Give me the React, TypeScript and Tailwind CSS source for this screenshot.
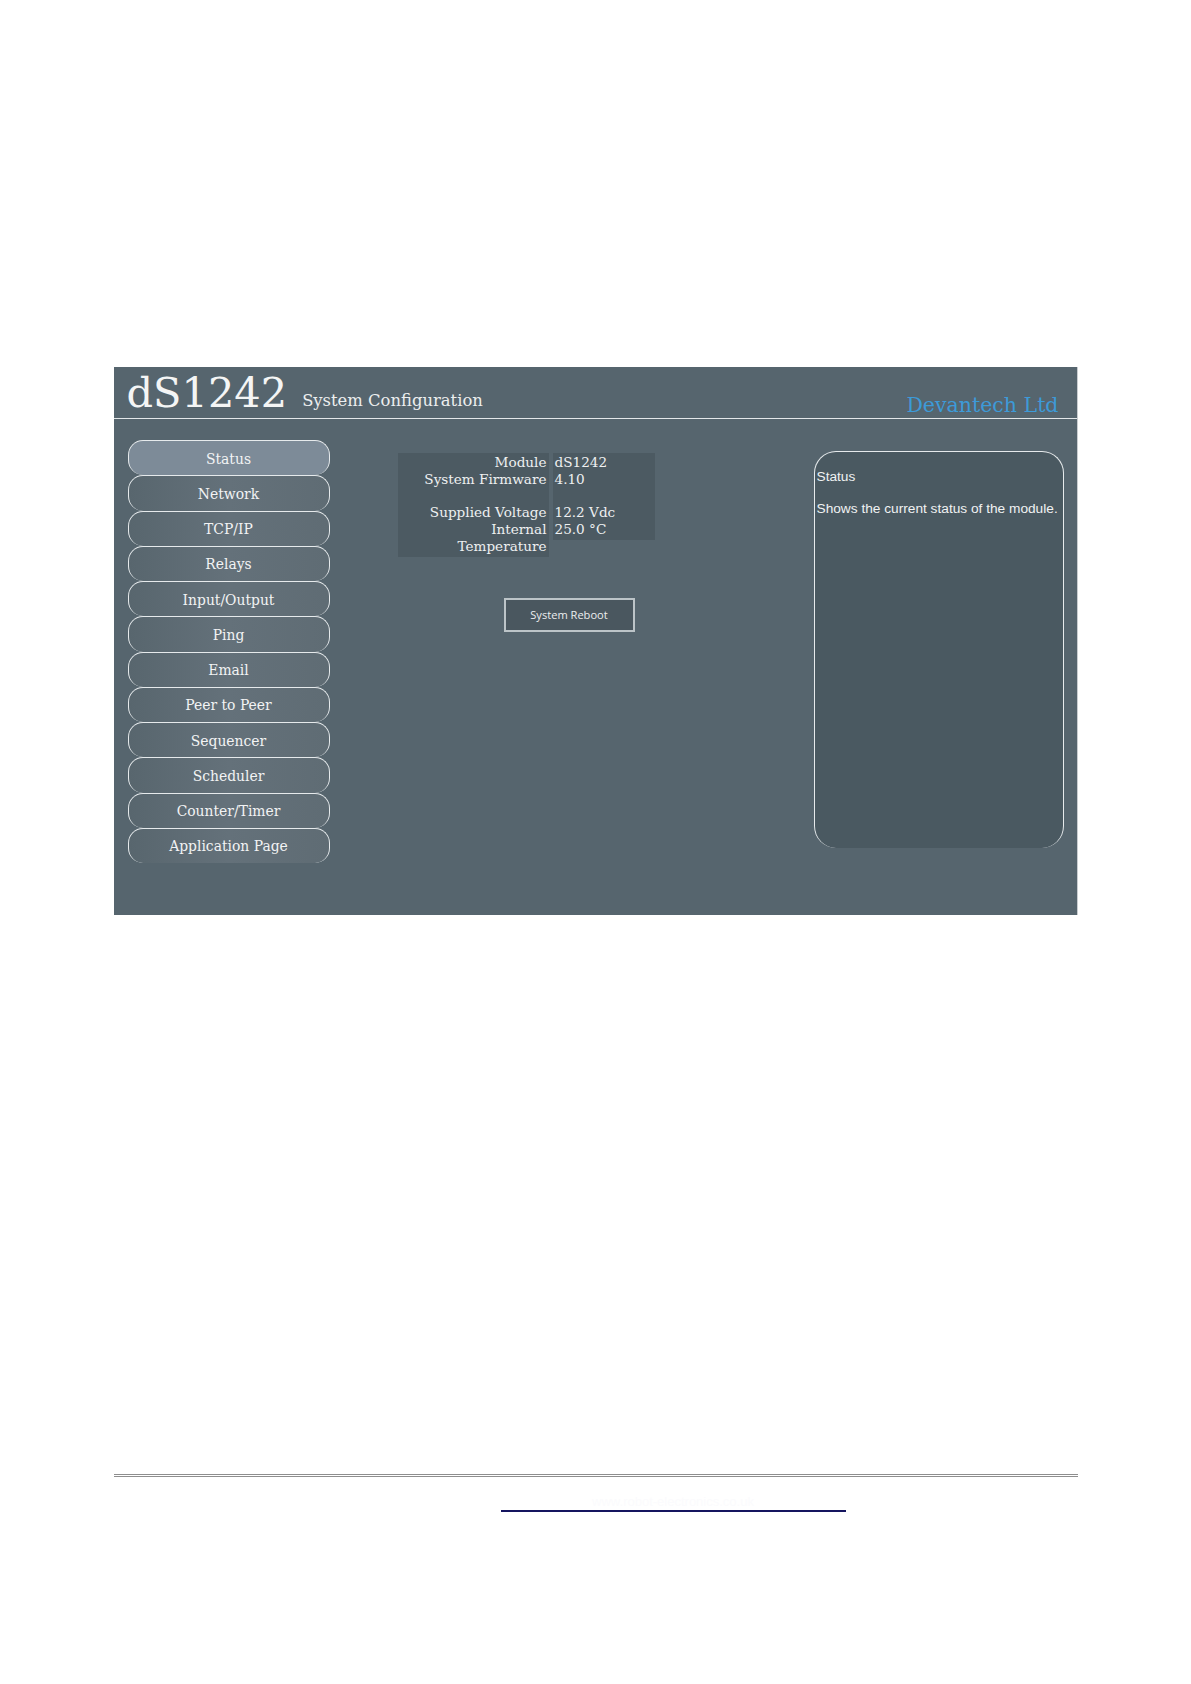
import React from "react";

const navItems = [
  "Status",
  "Network",
  "TCP/IP",
  "Relays",
  "Input/Output",
  "Ping",
  "Email",
  "Peer to Peer",
  "Sequencer",
  "Scheduler",
  "Counter/Timer",
  "Application Page",
];

const serif = "font-['DejaVu_Serif',serif]";

export default function App() {
  return (
    <div className="min-h-[1684px] w-full bg-white">
      <div className="pt-[367px]">
        <div className="mx-auto flex h-[548px] w-[964px] flex-col border-r border-[#c9cdd0] bg-[#56656e]">
          {/* Header */}
          <div className="flex h-[52px] shrink-0 items-end border-b border-[#e3e7e9] pl-[13px] pr-[18px]">
            <span className={`${serif} mb-[5px] text-[41.5px] leading-none text-[#f4f5f5]`}>dS1242</span>
            <span className={`${serif} mb-[9px] ml-[15px] text-[16.4px] leading-none text-[#eceeef]`}>
              System Configuration
            </span>
            <span className={`${serif} mb-[3px] ml-auto text-[20.5px] leading-none text-[#3d9ad8]`}>
              Devantech Ltd
            </span>
          </div>

          {/* Body */}
          <div className="flex flex-1">
            {/* Nav */}
            <div className="ml-[14px] mt-[21px] flex w-[202px] flex-col">
              {navItems.map((item, i) => (
                <div
                  key={item}
                  className={`flex h-[35.25px] items-center justify-center rounded-[15px] border-x border-t border-[#e6eaec] ${serif} pt-[2px] text-[13.9px] text-[#f2f3f4] ${
                    i === 0
                      ? "bg-[#7d8b98]"
                      : "bg-linear-to-r from-[#58666e] via-[#64717a] to-[#5f6c74]"
                  }`}
                >
                  {item}
                </div>
              ))}
            </div>

            {/* Middle: status table + reboot */}
            <div className="ml-[68px] mt-[34px] flex flex-col items-start">
              <div className={`flex items-start gap-[4px] ${serif} text-[13.6px] leading-[16.7px] text-[#eef0f1]`}>
                <div className="w-[151px] bg-[#4c5a62] pb-[3px] pr-[2px] pt-[1px] text-right">
                  <div>Module</div>
                  <div>System Firmware</div>
                  <div>&nbsp;</div>
                  <div>Supplied Voltage</div>
                  <div>Internal</div>
                  <div>Temperature</div>
                </div>
                <div className="w-[102px] bg-[#4c5a62] pb-[2px] pl-[2px] pt-[1px]">
                  <div>dS1242</div>
                  <div>4.10</div>
                  <div>&nbsp;</div>
                  <div>12.2 Vdc</div>
                  <div>25.0 °C</div>
                </div>
              </div>
              <button
                type="button"
                className="ml-[106px] mt-[41px] flex h-[34px] w-[131px] items-center justify-center border-2 border-[#bcc4c8] bg-[#4a575f] font-['Open_Sans',sans-serif] text-[11.1px] text-[#eceeef]"
              >
                System Reboot
              </button>
            </div>

            {/* Help panel */}
            <div className="ml-auto mr-[13px] mt-[32px] h-[397px] w-[250px] rounded-[22px] border-x border-t border-[#e6eaec] bg-[#4a5961] pl-[2px] pt-[17px] font-['Liberation_Sans',Arial,sans-serif] text-[13.7px] leading-[16px] text-[#f0f2f3]">
              <div>Status</div>
              <div>&nbsp;</div>
              <div>Shows the current status of the module.</div>
            </div>
          </div>
        </div>

        {/* Footer */}
        <div className="mx-auto mt-[559px] w-[964px]">
          <div className="h-[3px] border-y border-[#8e8e8e]" />
          <div className="mt-[11px] pl-[387px]">
            <span className="inline-block w-[345px] border-b-2 border-[#15155f] text-center font-['Liberation_Sans',Arial,sans-serif] text-[13px] leading-[16px] text-[#fbfbfd]">
              www.robot-electronics.co.uk
            </span>
          </div>
        </div>
      </div>
    </div>
  );
}
